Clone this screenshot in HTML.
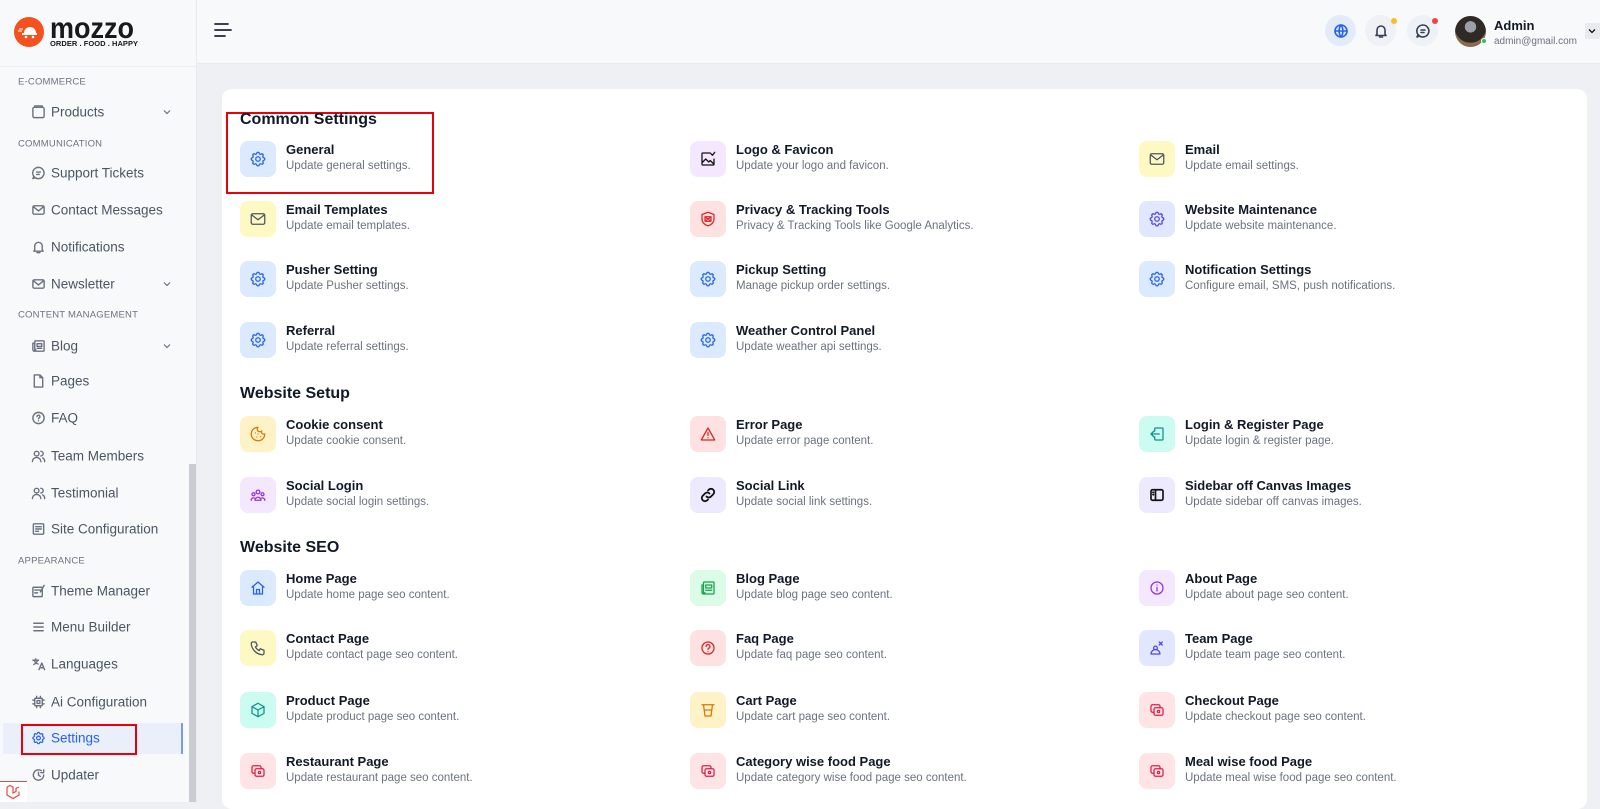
<!DOCTYPE html>
<html><head><meta charset="utf-8">
<style>
*{margin:0;padding:0;box-sizing:border-box}
body{width:1600px;height:802px;overflow:hidden;background:#eef0f3;font-family:"Liberation Sans",Arial,sans-serif;position:relative}
.abs{position:absolute}
#side{position:absolute;left:0;top:0;width:197px;height:802px;background:#f8f9fb;border-right:1px solid #e8eaee}
#head{position:absolute;left:197px;top:0;width:1403px;height:64px;background:#f8f9fb;border-bottom:1px solid #e8eaee}
.sl{position:absolute;left:18px;font-size:9.5px;color:#6b7280;letter-spacing:.2px;transform:translateY(-50%)}
.si{position:absolute;left:31px;font-size:13.5px;color:#4b5563;transform:translateY(-50%);display:flex;align-items:center;white-space:nowrap}
.si svg{width:15px;height:15px;margin-right:5px;stroke:#6b7280;fill:none;stroke-width:1.5;stroke-linecap:round;stroke-linejoin:round}
.chev{position:absolute;left:163px;width:8px;height:8px;transform:translateY(-50%)}
#card{position:absolute;left:222px;top:89px;width:1365px;height:720px;background:#fff;border-radius:10px}
.h{position:absolute;left:240px;font-size:16px;font-weight:bold;color:#111827;transform:translateY(-50%)}
.it{position:absolute;height:36px;width:420px}
.ic{position:absolute;left:0;top:0;width:36px;height:36px;border-radius:8px;display:flex;align-items:center;justify-content:center}
.ic svg{width:18px;height:18px;fill:none;stroke-width:1.7;stroke-linecap:round;stroke-linejoin:round}
.t{position:absolute;left:46px;top:1px;font-size:13px;font-weight:bold;color:#111827;white-space:nowrap}
.d{position:absolute;left:46px;top:19px;font-size:11.5px;color:#6b7280;white-space:nowrap}
.bl{background:#dbeafe}.bl svg{stroke:#2563eb}
.ye{background:#fef9c3}.ye svg{stroke:#4b5563}
.pu{background:#f3e8ff}.pu svg{stroke:#111}
.re{background:#fee2e2}.re svg{stroke:#dc2626}
.in{background:#e0e7ff}.in svg{stroke:#4f46e5}
.or{background:#fef3c7}.or svg{stroke:#d97706}
.te{background:#ccfbf1}.te svg{stroke:#0d9488}
.gr{background:#dcfce7}.gr svg{stroke:#16a34a}
.vi{background:#f3e8ff}.vi svg{stroke:#9333ea}
.ro{background:#ffe4e6}.ro svg{stroke:#e11d48}
.ib{background:#ede9fe}.ib svg{stroke:#111}
.hc{position:absolute;width:31px;height:31px;border-radius:50%;background:#eef1f6;display:flex;align-items:center;justify-content:center}
.hc svg{width:16px;height:16px;fill:none;stroke:#374151;stroke-width:1.6;stroke-linecap:round;stroke-linejoin:round}
</style></head><body>

<div id="side">
  <div class="abs" style="left:14px;top:17px;width:30px;height:30px;border-radius:50%;background:#f4511e"></div>
  <svg class="abs" style="left:18px;top:23px" width="22" height="16" viewBox="0 0 22 16"><path d="M6 10a6 6 0 0 1 12 0z" fill="#fff"/><rect x="4" y="10" width="15" height="2" fill="#fff"/><circle cx="8" cy="14" r="1.3" fill="#fff"/><circle cx="15" cy="14" r="1.3" fill="#fff"/><path d="M1 6h4M0 8h4" stroke="#fff" stroke-width="1"/></svg>
  <div class="abs" style="left:50px;top:14px;font-size:30px;font-weight:bold;color:#1a1a1a;line-height:30px;transform:scaleX(0.9);transform-origin:left top">mozzo</div>
  <div class="abs" style="left:50px;top:39px;font-size:7.5px;font-weight:bold;color:#1a1a1a;letter-spacing:.05px;white-space:nowrap">ORDER . FOOD . HAPPY</div>
  <div class="abs" style="left:0;top:66px;width:196px;height:1px;background:#eceef1"></div>

  <div class="sl" style="top:82px">E-COMMERCE</div>
  <div class="si" style="top:112px"><svg viewBox="0 0 16 16"><rect x="2" y="3" width="12" height="11" rx="1.5"/><path d="M4 3V1.5h8V3"/></svg>Products</div>
  <svg class="chev" style="top:112px" viewBox="0 0 8 8"><path d="M1 2.5l3 3 3-3" stroke="#6b7280" stroke-width="1.2" fill="none"/></svg>
  <div class="sl" style="top:144px">COMMUNICATION</div>
  <div class="si" style="top:173px"><svg viewBox="0 0 16 16"><path d="M8 2a6 6 0 1 1-5 9.5L2 14l2.5-1A6 6 0 0 1 8 2z"/><path d="M6 7h4M6 9.5h3"/></svg>Support Tickets</div>
  <div class="si" style="top:210px"><svg viewBox="0 0 16 16"><rect x="2" y="3.5" width="12" height="9" rx="1.5"/><path d="M2.5 4.5L8 9l5.5-4.5"/></svg>Contact Messages</div>
  <div class="si" style="top:247px"><svg viewBox="0 0 16 16"><path d="M4 11V7a4 4 0 0 1 8 0v4l1 1.5H3z"/><path d="M6.5 14h3"/></svg>Notifications</div>
  <div class="si" style="top:284px"><svg viewBox="0 0 16 16"><rect x="2" y="3.5" width="12" height="9" rx="1.5"/><path d="M2.5 4.5L8 9l5.5-4.5"/></svg>Newsletter</div>
  <svg class="chev" style="top:284px" viewBox="0 0 8 8"><path d="M1 2.5l3 3 3-3" stroke="#6b7280" stroke-width="1.2" fill="none"/></svg>
  <div class="sl" style="top:315px">CONTENT MANAGEMENT</div>
  <div class="si" style="top:346px"><svg viewBox="0 0 16 16"><rect x="4" y="2.5" width="10" height="11" rx="1"/><path d="M4 5H2v7a1.5 1.5 0 0 0 3 0M6.5 5.5h5v3h-5zM6.5 10.5h5"/></svg>Blog</div>
  <svg class="chev" style="top:346px" viewBox="0 0 8 8"><path d="M1 2.5l3 3 3-3" stroke="#6b7280" stroke-width="1.2" fill="none"/></svg>
  <div class="si" style="top:381px"><svg viewBox="0 0 16 16"><path d="M3.5 1.5h6l3 3v10h-9zM9.5 1.5v3h3"/></svg>Pages</div>
  <div class="si" style="top:418px"><svg viewBox="0 0 16 16"><circle cx="8" cy="8" r="6"/><path d="M6.5 6.5a1.5 1.5 0 1 1 2 1.4c-.4.2-.5.5-.5 1M8 11h0"/></svg>FAQ</div>
  <div class="si" style="top:456px"><svg viewBox="0 0 16 16"><circle cx="6" cy="5.5" r="2.5"/><path d="M1.5 14a4.5 4.5 0 0 1 9 0M10.5 3a2.5 2.5 0 0 1 0 5M12.5 10a4 4 0 0 1 2 4"/></svg>Team Members</div>
  <div class="si" style="top:493px"><svg viewBox="0 0 16 16"><circle cx="6" cy="5.5" r="2.5"/><path d="M1.5 14a4.5 4.5 0 0 1 9 0M10.5 3a2.5 2.5 0 0 1 0 5M12.5 10a4 4 0 0 1 2 4"/></svg>Testimonial</div>
  <div class="si" style="top:529px"><svg viewBox="0 0 16 16"><rect x="2.5" y="2.5" width="11" height="11" rx="1"/><path d="M5 5.5h6M5 8h6M5 10.5h3"/></svg>Site Configuration</div>
  <div class="sl" style="top:561px">APPEARANCE</div>
  <div class="si" style="top:591px"><svg viewBox="0 0 16 16"><rect x="2" y="4" width="10" height="10" rx="1"/><path d="M4 7h6M4 10h3M10 9l4-7"/></svg>Theme Manager</div>
  <div class="si" style="top:627px"><svg viewBox="0 0 16 16"><path d="M3 4h10M3 8h10M3 12h10"/></svg>Menu Builder</div>
  <div class="si" style="top:664px"><svg viewBox="0 0 16 16"><path d="M2 4h6M5 2.5V4M3.5 4c.5 2 2 3.5 4 4M7 4c-.5 2-2 3.5-4 4.5M8.5 14l3-7 3 7M9.5 12h4"/></svg>Languages</div>
  <div class="si" style="top:702px"><svg viewBox="0 0 16 16"><rect x="4" y="4" width="8" height="8" rx="1"/><rect x="6.5" y="6.5" width="3" height="3"/><path d="M6 2v2M10 2v2M6 12v2M10 12v2M2 6h2M2 10h2M12 6h2M12 10h2"/></svg>Ai Configuration</div>
  <div class="abs" style="left:3px;top:723px;width:180px;height:31px;background:#eaeff9;border-right:2px solid #7b9be8"></div>
  <div class="si" style="top:738px;color:#2563eb"><svg viewBox="0 0 24 24" style="stroke:#2563eb;stroke-width:2"><path d="M10.3 4.3c.4-1.8 3-1.8 3.4 0a1.7 1.7 0 0 0 2.6 1.1c1.5-.9 3.3.8 2.4 2.4a1.7 1.7 0 0 0 1 2.5c1.8.5 1.8 3 0 3.5a1.7 1.7 0 0 0-1 2.5c.9 1.6-.9 3.4-2.4 2.4a1.7 1.7 0 0 0-2.6 1.1c-.4 1.8-3 1.8-3.4 0a1.7 1.7 0 0 0-2.6-1.1c-1.5.9-3.3-.8-2.4-2.4a1.7 1.7 0 0 0-1-2.5c-1.8-.5-1.8-3 0-3.5a1.7 1.7 0 0 0 1-2.5c-.9-1.6.9-3.4 2.4-2.4a1.7 1.7 0 0 0 2.6-1.1z"/><circle cx="12" cy="12" r="3"/></svg>Settings</div>
  <div class="abs" style="left:21px;top:724px;width:116px;height:31px;border:2px solid #e8000b"></div>
  <div class="si" style="top:775px"><svg viewBox="0 0 16 16"><path d="M13.5 8A5.5 5.5 0 1 1 11 3.4M13.5 2.5v3h-3M8 5v3l2 1.5"/></svg>Updater</div>
  <div class="abs" style="left:189px;top:464px;width:7px;height:338px;background:#c9cdd3"></div>
  <div class="abs" style="left:0;top:781px;width:27px;height:21px;background:#fff;border-top:1px solid #ef4444"></div>
  <svg class="abs" style="left:5px;top:784px" width="16" height="16" viewBox="0 0 16 16"><path d="M2 3l3-1.5L8 3v6l3-1.5V4.5l3-1.5 M2 3v8l6 3.5 6-3.5V7.5" fill="none" stroke="#ef4444" stroke-width="1.2"/></svg>
</div>

<div id="head">
  <svg class="abs" style="left:17px;top:22px" width="18" height="16" viewBox="0 0 18 16"><path d="M1 2h13M1 8h16M1 14h10" stroke="#1f2937" stroke-width="1.8" stroke-linecap="round"/></svg>
</div>
<div class="hc" style="left:1325px;top:15px;background:#e3eafa"><svg viewBox="0 0 16 16" style="stroke:#2563eb"><circle cx="8" cy="8" r="6"/><path d="M2 8h12M8 2c-2.5 3-2.5 9 0 12M8 2c2.5 3 2.5 9 0 12"/></svg></div>
<div class="hc" style="left:1365px;top:15px"><svg viewBox="0 0 16 16"><path d="M4 11V7a4 4 0 0 1 8 0v4l1 1.5H3z"/><path d="M6.5 14h3"/></svg></div>
<div class="abs" style="left:1391px;top:18px;width:6px;height:6px;border-radius:50%;background:#fbbf24"></div>
<div class="hc" style="left:1407px;top:15px"><svg viewBox="0 0 16 16"><path d="M8 2a6 6 0 1 1-5 9.5L2 14l2.5-1A6 6 0 0 1 8 2z"/><path d="M6 7h4M6 9.5h3"/></svg></div>
<div class="abs" style="left:1432px;top:18px;width:6px;height:6px;border-radius:50%;background:#ef4444"></div>
<div class="abs" style="left:1455px;top:16px;width:31px;height:31px;border-radius:50%;background:radial-gradient(circle at 50% 35%,#9aa0a8 0 22%,#2f2a26 23% 62%,#8a6a4c 63%)"></div>
<div class="abs" style="left:1481px;top:38px;width:6px;height:6px;border-radius:50%;background:#22c55e;border:1px solid #fff"></div>
<div class="abs" style="left:1494px;top:18px;font-size:13px;font-weight:bold;color:#111827">Admin</div>
<div class="abs" style="left:1494px;top:36px;font-size:10px;color:#6b7280">admin@gmail.com</div>
<div class="abs" style="left:1585px;top:23px;width:15px;height:16px;background:#e8eaee;border-radius:2px"></div>
<svg class="abs" style="left:1588px;top:27px" width="8" height="8" viewBox="0 0 8 8"><path d="M1 2.5l3 3 3-3" stroke="#111" stroke-width="1.3" fill="none"/></svg>

<div id="card"></div>
<div class="abs" style="left:226px;top:112px;width:208px;height:82px;border:2px solid #e8000b"></div>

<div class="h" style="top:120px">Common Settings</div>
<div class="h" style="top:394px">Website Setup</div>
<div class="h" style="top:548px">Website SEO</div>

<div class="it" style="left:240px;top:141px"><div class="ic bl"><svg viewBox="0 0 24 24"><path d="M10.3 4.3c.4-1.8 3-1.8 3.4 0a1.7 1.7 0 0 0 2.6 1.1c1.5-.9 3.3.8 2.4 2.4a1.7 1.7 0 0 0 1 2.5c1.8.5 1.8 3 0 3.5a1.7 1.7 0 0 0-1 2.5c.9 1.6-.9 3.4-2.4 2.4a1.7 1.7 0 0 0-2.6 1.1c-.4 1.8-3 1.8-3.4 0a1.7 1.7 0 0 0-2.6-1.1c-1.5.9-3.3-.8-2.4-2.4a1.7 1.7 0 0 0-1-2.5c-1.8-.5-1.8-3 0-3.5a1.7 1.7 0 0 0 1-2.5c-.9-1.6.9-3.4 2.4-2.4a1.7 1.7 0 0 0 2.6-1.1z"/><circle cx="12" cy="12" r="3"/></svg></div><div class="t">General</div><div class="d">Update general settings.</div></div>
<div class="it" style="left:690px;top:141px"><div class="ic pu"><svg viewBox="0 0 24 24"><path d="M15 4H5a1 1 0 0 0-1 1v14a1 1 0 0 0 1 1h14a1 1 0 0 0 1-1v-7M4 17l5-5 4 4 2-2 5 5M16 5l2 2 3-4"/></svg></div><div class="t">Logo &amp; Favicon</div><div class="d">Update your logo and favicon.</div></div>
<div class="it" style="left:1139px;top:141px"><div class="ic ye"><svg viewBox="0 0 24 24"><rect x="3" y="5" width="18" height="14" rx="2"/><path d="M3.5 6.5L12 13l8.5-6.5"/></svg></div><div class="t">Email</div><div class="d">Update email settings.</div></div>

<div class="it" style="left:240px;top:201px"><div class="ic ye"><svg viewBox="0 0 24 24"><rect x="3" y="5" width="18" height="14" rx="2"/><path d="M3.5 6.5L12 13l8.5-6.5"/></svg></div><div class="t">Email Templates</div><div class="d">Update email templates.</div></div>
<div class="it" style="left:690px;top:201px"><div class="ic re"><svg viewBox="0 0 24 24"><path d="M12 3l8 3v6c0 5-4 8-8 9-4-1-8-4-8-9V6z"/><path d="M9 10l6 4M15 10l-6 4M8 9h8v6H8z"/></svg></div><div class="t">Privacy &amp; Tracking Tools</div><div class="d">Privacy &amp; Tracking Tools like Google Analytics.</div></div>
<div class="it" style="left:1139px;top:201px"><div class="ic in"><svg viewBox="0 0 24 24"><path d="M10.3 4.3c.4-1.8 3-1.8 3.4 0a1.7 1.7 0 0 0 2.6 1.1c1.5-.9 3.3.8 2.4 2.4a1.7 1.7 0 0 0 1 2.5c1.8.5 1.8 3 0 3.5a1.7 1.7 0 0 0-1 2.5c.9 1.6-.9 3.4-2.4 2.4a1.7 1.7 0 0 0-2.6 1.1c-.4 1.8-3 1.8-3.4 0a1.7 1.7 0 0 0-2.6-1.1c-1.5.9-3.3-.8-2.4-2.4a1.7 1.7 0 0 0-1-2.5c-1.8-.5-1.8-3 0-3.5a1.7 1.7 0 0 0 1-2.5c-.9-1.6.9-3.4 2.4-2.4a1.7 1.7 0 0 0 2.6-1.1z"/><circle cx="12" cy="12" r="3"/></svg></div><div class="t">Website Maintenance</div><div class="d">Update website maintenance.</div></div>

<div class="it" style="left:240px;top:261px"><div class="ic bl"><svg viewBox="0 0 24 24"><path d="M10.3 4.3c.4-1.8 3-1.8 3.4 0a1.7 1.7 0 0 0 2.6 1.1c1.5-.9 3.3.8 2.4 2.4a1.7 1.7 0 0 0 1 2.5c1.8.5 1.8 3 0 3.5a1.7 1.7 0 0 0-1 2.5c.9 1.6-.9 3.4-2.4 2.4a1.7 1.7 0 0 0-2.6 1.1c-.4 1.8-3 1.8-3.4 0a1.7 1.7 0 0 0-2.6-1.1c-1.5.9-3.3-.8-2.4-2.4a1.7 1.7 0 0 0-1-2.5c-1.8-.5-1.8-3 0-3.5a1.7 1.7 0 0 0 1-2.5c-.9-1.6.9-3.4 2.4-2.4a1.7 1.7 0 0 0 2.6-1.1z"/><circle cx="12" cy="12" r="3"/></svg></div><div class="t">Pusher Setting</div><div class="d">Update Pusher settings.</div></div>
<div class="it" style="left:690px;top:261px"><div class="ic bl"><svg viewBox="0 0 24 24"><path d="M10.3 4.3c.4-1.8 3-1.8 3.4 0a1.7 1.7 0 0 0 2.6 1.1c1.5-.9 3.3.8 2.4 2.4a1.7 1.7 0 0 0 1 2.5c1.8.5 1.8 3 0 3.5a1.7 1.7 0 0 0-1 2.5c.9 1.6-.9 3.4-2.4 2.4a1.7 1.7 0 0 0-2.6 1.1c-.4 1.8-3 1.8-3.4 0a1.7 1.7 0 0 0-2.6-1.1c-1.5.9-3.3-.8-2.4-2.4a1.7 1.7 0 0 0-1-2.5c-1.8-.5-1.8-3 0-3.5a1.7 1.7 0 0 0 1-2.5c-.9-1.6.9-3.4 2.4-2.4a1.7 1.7 0 0 0 2.6-1.1z"/><circle cx="12" cy="12" r="3"/></svg></div><div class="t">Pickup Setting</div><div class="d">Manage pickup order settings.</div></div>
<div class="it" style="left:1139px;top:261px"><div class="ic bl"><svg viewBox="0 0 24 24"><path d="M10.3 4.3c.4-1.8 3-1.8 3.4 0a1.7 1.7 0 0 0 2.6 1.1c1.5-.9 3.3.8 2.4 2.4a1.7 1.7 0 0 0 1 2.5c1.8.5 1.8 3 0 3.5a1.7 1.7 0 0 0-1 2.5c.9 1.6-.9 3.4-2.4 2.4a1.7 1.7 0 0 0-2.6 1.1c-.4 1.8-3 1.8-3.4 0a1.7 1.7 0 0 0-2.6-1.1c-1.5.9-3.3-.8-2.4-2.4a1.7 1.7 0 0 0-1-2.5c-1.8-.5-1.8-3 0-3.5a1.7 1.7 0 0 0 1-2.5c-.9-1.6.9-3.4 2.4-2.4a1.7 1.7 0 0 0 2.6-1.1z"/><circle cx="12" cy="12" r="3"/></svg></div><div class="t">Notification Settings</div><div class="d">Configure email, SMS, push notifications.</div></div>

<div class="it" style="left:240px;top:322px"><div class="ic bl"><svg viewBox="0 0 24 24"><path d="M10.3 4.3c.4-1.8 3-1.8 3.4 0a1.7 1.7 0 0 0 2.6 1.1c1.5-.9 3.3.8 2.4 2.4a1.7 1.7 0 0 0 1 2.5c1.8.5 1.8 3 0 3.5a1.7 1.7 0 0 0-1 2.5c.9 1.6-.9 3.4-2.4 2.4a1.7 1.7 0 0 0-2.6 1.1c-.4 1.8-3 1.8-3.4 0a1.7 1.7 0 0 0-2.6-1.1c-1.5.9-3.3-.8-2.4-2.4a1.7 1.7 0 0 0-1-2.5c-1.8-.5-1.8-3 0-3.5a1.7 1.7 0 0 0 1-2.5c-.9-1.6.9-3.4 2.4-2.4a1.7 1.7 0 0 0 2.6-1.1z"/><circle cx="12" cy="12" r="3"/></svg></div><div class="t">Referral</div><div class="d">Update referral settings.</div></div>
<div class="it" style="left:690px;top:322px"><div class="ic bl"><svg viewBox="0 0 24 24"><path d="M10.3 4.3c.4-1.8 3-1.8 3.4 0a1.7 1.7 0 0 0 2.6 1.1c1.5-.9 3.3.8 2.4 2.4a1.7 1.7 0 0 0 1 2.5c1.8.5 1.8 3 0 3.5a1.7 1.7 0 0 0-1 2.5c.9 1.6-.9 3.4-2.4 2.4a1.7 1.7 0 0 0-2.6 1.1c-.4 1.8-3 1.8-3.4 0a1.7 1.7 0 0 0-2.6-1.1c-1.5.9-3.3-.8-2.4-2.4a1.7 1.7 0 0 0-1-2.5c-1.8-.5-1.8-3 0-3.5a1.7 1.7 0 0 0 1-2.5c-.9-1.6.9-3.4 2.4-2.4a1.7 1.7 0 0 0 2.6-1.1z"/><circle cx="12" cy="12" r="3"/></svg></div><div class="t">Weather Control Panel</div><div class="d">Update weather api settings.</div></div>

<div class="it" style="left:240px;top:416px"><div class="ic or"><svg viewBox="0 0 24 24"><path d="M12 3a9 9 0 1 0 9 9 3 3 0 0 1-4-4 3 3 0 0 1-5-5z"/><path d="M8.5 10.5h0M15.5 15.5h0M10.5 16h0M12 12h0"/></svg></div><div class="t">Cookie consent</div><div class="d">Update cookie consent.</div></div>
<div class="it" style="left:690px;top:416px"><div class="ic re"><svg viewBox="0 0 24 24"><path d="M12 4L3 20h18z"/><path d="M12 10v4M12 17h0"/></svg></div><div class="t">Error Page</div><div class="d">Update error page content.</div></div>
<div class="it" style="left:1139px;top:416px"><div class="ic te"><svg viewBox="0 0 24 24"><path d="M9 8V5a1 1 0 0 1 1-1h9a1 1 0 0 1 1 1v14a1 1 0 0 1-1 1h-9a1 1 0 0 1-1-1v-3M15 12H4M8 8l-4 4 4 4"/></svg></div><div class="t">Login &amp; Register Page</div><div class="d">Update login &amp; register page.</div></div>

<div class="it" style="left:240px;top:477px"><div class="ic vi"><svg viewBox="0 0 24 24"><circle cx="12" cy="8" r="2.5"/><circle cx="6" cy="11" r="2"/><circle cx="18" cy="11" r="2"/><path d="M8 19a4 4 0 0 1 8 0zM3 19a3 3 0 0 1 4-3M21 19a3 3 0 0 0-4-3"/></svg></div><div class="t">Social Login</div><div class="d">Update social login settings.</div></div>
<div class="it" style="left:690px;top:477px"><div class="ic ib"><svg viewBox="0 0 24 24" style="stroke-width:2.4"><path d="M10 14a4 4 0 0 0 6 0l3-3a4 4 0 0 0-6-6l-1 1M14 10a4 4 0 0 0-6 0l-3 3a4 4 0 0 0 6 6l1-1"/></svg></div><div class="t">Social Link</div><div class="d">Update social link settings.</div></div>
<div class="it" style="left:1139px;top:477px"><div class="ic ib"><svg viewBox="0 0 24 24" style="stroke-width:2.2"><rect x="4" y="5" width="16" height="14" rx="2"/><path d="M10 5v14M6.5 8.5h1M6.5 11.5h1"/></svg></div><div class="t">Sidebar off Canvas Images</div><div class="d">Update sidebar off canvas images.</div></div>

<div class="it" style="left:240px;top:570px"><div class="ic bl"><svg viewBox="0 0 24 24"><path d="M4 11l8-7 8 7M6 9v11h12V9M10 20v-6h4v6"/></svg></div><div class="t">Home Page</div><div class="d">Update home page seo content.</div></div>
<div class="it" style="left:690px;top:570px"><div class="ic gr"><svg viewBox="0 0 24 24"><rect x="6" y="4" width="14" height="16" rx="1"/><path d="M6 8H4v10a2 2 0 0 0 4 0M9 8h8v4H9zM9 15h8"/></svg></div><div class="t">Blog Page</div><div class="d">Update blog page seo content.</div></div>
<div class="it" style="left:1139px;top:570px"><div class="ic vi"><svg viewBox="0 0 24 24"><circle cx="12" cy="12" r="8"/><path d="M12 11v5M12 8h0"/></svg></div><div class="t">About Page</div><div class="d">Update about page seo content.</div></div>

<div class="it" style="left:240px;top:630px"><div class="ic ye"><svg viewBox="0 0 24 24"><path d="M5 4h4l2 5-2.5 1.5a11 11 0 0 0 5 5L15 13l5 2v4a2 2 0 0 1-2 2A16 16 0 0 1 3 6a2 2 0 0 1 2-2"/></svg></div><div class="t">Contact Page</div><div class="d">Update contact page seo content.</div></div>
<div class="it" style="left:690px;top:630px"><div class="ic re"><svg viewBox="0 0 24 24"><circle cx="12" cy="12" r="8"/><path d="M9.5 10a2.5 2.5 0 1 1 3.5 2.3c-.7.3-1 .8-1 1.5M12 17h0"/></svg></div><div class="t">Faq Page</div><div class="d">Update faq page seo content.</div></div>
<div class="it" style="left:1139px;top:630px"><div class="ic in"><svg viewBox="0 0 24 24"><circle cx="10" cy="12" r="2.5"/><path d="M4 20a6 6 0 0 1 12 0zM15 4l4 4M19 4l-4 4"/></svg></div><div class="t">Team Page</div><div class="d">Update team page seo content.</div></div>

<div class="it" style="left:240px;top:692px"><div class="ic te"><svg viewBox="0 0 24 24"><path d="M12 3l8 4.5v9L12 21l-8-4.5v-9zM12 12l8-4.5M12 12v9M12 12L4 7.5"/></svg></div><div class="t">Product Page</div><div class="d">Update product page seo content.</div></div>
<div class="it" style="left:690px;top:692px"><div class="ic or"><svg viewBox="0 0 24 24"><path d="M4 5h16M6 5l2 15h8l2-15M8 12h8"/></svg></div><div class="t">Cart Page</div><div class="d">Update cart page seo content.</div></div>
<div class="it" style="left:1139px;top:692px"><div class="ic ro"><svg viewBox="0 0 24 24"><rect x="8" y="9" width="12" height="10" rx="2"/><path d="M16 9V7a2 2 0 0 0-2-2H6a2 2 0 0 0-2 2v6a2 2 0 0 0 2 2h2"/><circle cx="14" cy="14" r="1.5"/></svg></div><div class="t">Checkout Page</div><div class="d">Update checkout page seo content.</div></div>

<div class="it" style="left:240px;top:753px"><div class="ic ro"><svg viewBox="0 0 24 24"><rect x="8" y="9" width="12" height="10" rx="2"/><path d="M16 9V7a2 2 0 0 0-2-2H6a2 2 0 0 0-2 2v6a2 2 0 0 0 2 2h2"/><circle cx="14" cy="14" r="1.5"/></svg></div><div class="t">Restaurant Page</div><div class="d">Update restaurant page seo content.</div></div>
<div class="it" style="left:690px;top:753px"><div class="ic ro"><svg viewBox="0 0 24 24"><rect x="8" y="9" width="12" height="10" rx="2"/><path d="M16 9V7a2 2 0 0 0-2-2H6a2 2 0 0 0-2 2v6a2 2 0 0 0 2 2h2"/><circle cx="14" cy="14" r="1.5"/></svg></div><div class="t">Category wise food Page</div><div class="d">Update category wise food page seo content.</div></div>
<div class="it" style="left:1139px;top:753px"><div class="ic ro"><svg viewBox="0 0 24 24"><rect x="8" y="9" width="12" height="10" rx="2"/><path d="M16 9V7a2 2 0 0 0-2-2H6a2 2 0 0 0-2 2v6a2 2 0 0 0 2 2h2"/><circle cx="14" cy="14" r="1.5"/></svg></div><div class="t">Meal wise food Page</div><div class="d">Update meal wise food page seo content.</div></div>

</body></html>
